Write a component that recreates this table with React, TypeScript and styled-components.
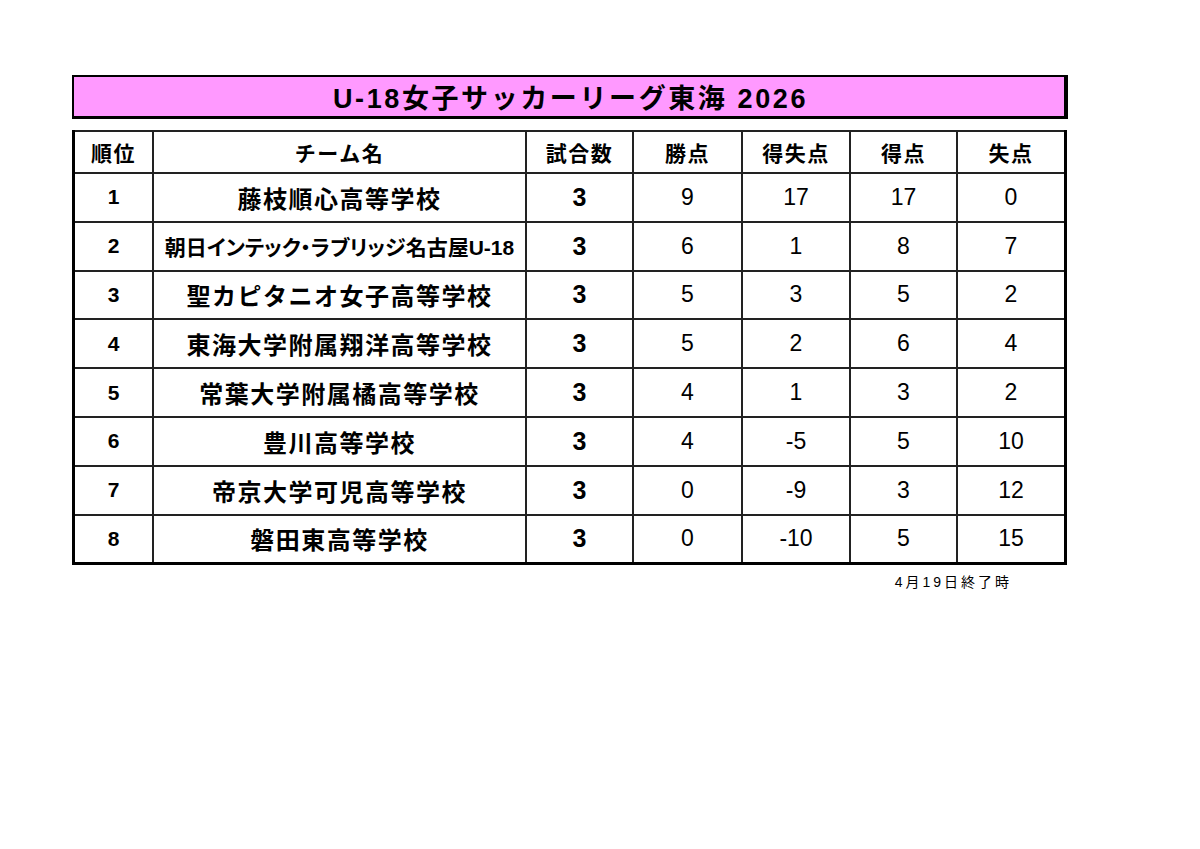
import React from "react";
import styled, { createGlobalStyle } from "styled-components";

const Global = createGlobalStyle`
  html, body { margin: 0; padding: 0; background: #ffffff; }
  body { font-family: "Liberation Sans", "Noto Sans CJK JP", sans-serif; color: #000; }
`;

const Page = styled.div`
  width: 1200px;
  height: 849px;
  padding: 75px 0 0 72px;
  box-sizing: border-box;
  display: flex;
  flex-direction: column;
`;

const Title = styled.div`
  width: 996px;
  height: 44px;
  box-sizing: border-box;
  background: #ff99ff;
  border-style: solid;
  border-color: #000;
  border-width: 2px 4px 3px 2px;
  display: flex;
  align-items: center;
  justify-content: center;
  padding-left: 3px;
  font-family: "Liberation Sans", "Noto Sans CJK JP", sans-serif;
  font-weight: 700;
  font-size: 27px;
  letter-spacing: 2.6px;
`;

const Table = styled.table`
  margin-top: 11px;
  width: 995px;
  border-collapse: collapse;
  table-layout: fixed;
  border: 3px solid #000;
  border-top-width: 2px;
`;

const HeadCell = styled.th<{ $w: number }>`
  width: ${(p) => p.$w}px;
  height: 40px;
  border: 2px solid #222;
  padding: 0;
  font-weight: 700;
  font-size: 21px;
  letter-spacing: 1.5px;
  text-align: center;
  vertical-align: middle;
  font-family: "Liberation Sans", "Noto Sans CJK JP", sans-serif;
`;

const Row = styled.tr`
  height: 48.8px;
`;

type Kind = "rank" | "name" | "games" | "num";

const Cell = styled.td<{ $kind: Kind; $small?: boolean }>`
  border: 2px solid #222;
  padding: 0;
  text-align: center;
  vertical-align: middle;
  white-space: nowrap;
  font-family: "Liberation Sans", "Noto Sans CJK JP", sans-serif;
  font-weight: ${(p) => (p.$kind === "num" ? 400 : 700)};
  font-size: ${(p) =>
    p.$kind === "rank"
      ? "21px"
      : p.$kind === "games"
      ? "25px"
      : p.$kind === "num"
      ? "23px"
      : p.$small
      ? "21px"
      : "24px"};
  letter-spacing: ${(p) => (p.$kind === "name" ? (p.$small ? "0px" : "1.5px") : "0")};
  font-feature-settings: ${(p) => (p.$small ? '"palt"' : "normal")};
`;

const Footer = styled.div`
  width: 996px;
  display: flex;
  justify-content: flex-end;
  padding-right: 56px;
  box-sizing: border-box;
  margin-top: 7px;
  font-size: 14px;
  line-height: 20px;
  letter-spacing: 3px;
  font-family: "Liberation Sans", "Noto Sans CJK JP", sans-serif;
`;

const cols = [
  { label: "順位", w: 77 },
  { label: "チーム名", w: 371 },
  { label: "試合数", w: 105 },
  { label: "勝点", w: 107 },
  { label: "得失点", w: 106 },
  { label: "得点", w: 105 },
  { label: "失点", w: 106 },
];

const rows = [
  { r: 1, name: "藤枝順心高等学校", g: 3, pts: 9, diff: 17, gf: 17, ga: 0 },
  { r: 2, name: "朝日インテック・ラブリッジ名古屋U-18", g: 3, pts: 6, diff: 1, gf: 8, ga: 7, small: true },
  { r: 3, name: "聖カピタニオ女子高等学校", g: 3, pts: 5, diff: 3, gf: 5, ga: 2 },
  { r: 4, name: "東海大学附属翔洋高等学校", g: 3, pts: 5, diff: 2, gf: 6, ga: 4 },
  { r: 5, name: "常葉大学附属橘高等学校", g: 3, pts: 4, diff: 1, gf: 3, ga: 2 },
  { r: 6, name: "豊川高等学校", g: 3, pts: 4, diff: -5, gf: 5, ga: 10 },
  { r: 7, name: "帝京大学可児高等学校", g: 3, pts: 0, diff: -9, gf: 3, ga: 12 },
  { r: 8, name: "磐田東高等学校", g: 3, pts: 0, diff: -10, gf: 5, ga: 15 },
];

export default function App() {
  return (
    <>
      <Global />
      <Page>
        <Title>U-18女子サッカーリーグ東海 2026</Title>
        <Table>
          <thead>
            <tr>
              {cols.map((c) => (
                <HeadCell key={c.label} $w={c.w}>
                  {c.label}
                </HeadCell>
              ))}
            </tr>
          </thead>
          <tbody>
            {rows.map((row) => (
              <Row key={row.r}>
                <Cell $kind="rank">{row.r}</Cell>
                <Cell $kind="name" $small={row.small}>
                  {row.name}
                </Cell>
                <Cell $kind="games">{row.g}</Cell>
                <Cell $kind="num">{row.pts}</Cell>
                <Cell $kind="num">{row.diff}</Cell>
                <Cell $kind="num">{row.gf}</Cell>
                <Cell $kind="num">{row.ga}</Cell>
              </Row>
            ))}
          </tbody>
        </Table>
        <Footer>4月19日終了時</Footer>
      </Page>
    </>
  );
}
